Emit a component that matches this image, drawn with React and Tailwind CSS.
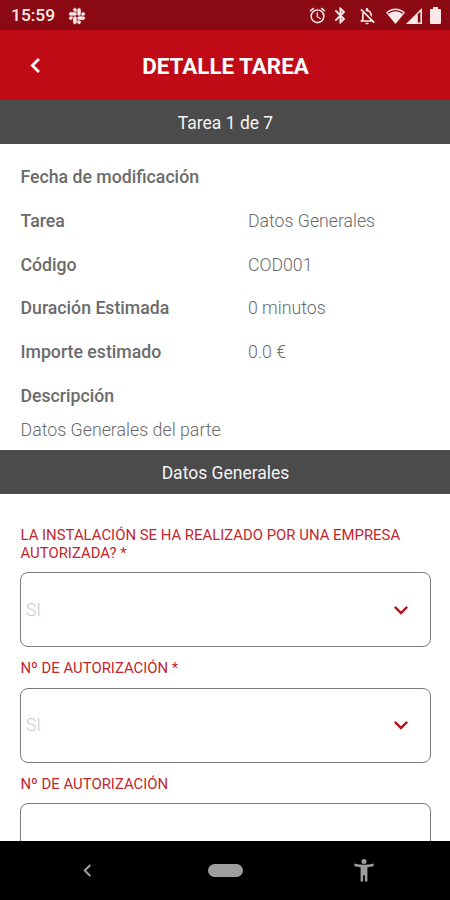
import React from "react";
import {
  MdBluetooth,
  MdChevronLeft,
  MdKeyboardArrowDown,
  MdOutlineAlarm,
  MdOutlineNotificationsOff,
} from "react-icons/md";
import { FaSlack } from "react-icons/fa";

const details = [
  { label: "Fecha de modificación", value: "" },
  { label: "Tarea", value: "Datos Generales" },
  { label: "Código", value: "COD001" },
  { label: "Duración Estimada", value: "0 minutos" },
  { label: "Importe estimado", value: "0.0 €" },
];

const StatusBar = () => {
  return (
    <div className="flex h-[30px] shrink-0 items-center bg-[#8b0912] pl-[11px] pr-[9px] pt-px text-[#fbe9e9]">
      <span className="w-[57px] pt-px text-[17.4px] font-medium leading-none">15:59</span>
      <FaSlack size={18} stroke="currentColor" strokeWidth={10} />
      <div className="ml-auto flex items-center">
        <MdOutlineAlarm size={19} />
        <MdBluetooth size={19} strokeWidth={0.6} className="ml-[4px] [&>path:first-child]:stroke-none" />
        <MdOutlineNotificationsOff size={20} className="ml-[7px]" />
        <svg width="19" height="16" viewBox="0 0 19 16" className="ml-[9px]">
          <path d="M0 4.4C5.5-.9 13.5-.9 19 4.4L9.5 16z" fill="currentColor" />
          <path d="M2 5.2C6.5 1.7 12.5 1.7 17 5.2" fill="none" stroke="#8b0912" strokeWidth="1.2" />
        </svg>
        <svg width="16" height="16" viewBox="0 0 16 16" className="ml-px">
          <path d="M16 0v16H0z" fill="currentColor" />
          <path d="M11.8 6.2l2.6-2.6v10.8h-2.6z" fill="#8b0912" />
        </svg>
        <svg width="11" height="17" viewBox="0 0 11 17" className="ml-[8px]">
          <path d="M3 0h5v2h2a1 1 0 0 1 1 1v13a1 1 0 0 1-1 1H1a1 1 0 0 1-1-1V3a1 1 0 0 1 1-1h2z" fill="currentColor" />
        </svg>
      </div>
    </div>
  );
};

const SectionBar = ({ children }) => {
  return (
    <div className="flex h-11 shrink-0 items-center justify-center bg-[#4b4b4b] pl-px pt-[3px] text-[17.5px] text-[#f4f4f4]">
      {children}
    </div>
  );
};

const Field = ({ label, children, select }) => {
  return (
    <div className="shrink-0">
      <label className="block pl-[0.5px] text-[14.9px] leading-[17.5px] text-[#c4262e]">{label}</label>
      <div className="mt-[10px] flex h-[75px] items-center justify-between rounded-[8px] border-[1.5px] border-[#7b7b7b] pl-[5px] pr-[15.5px]">
        <span className="pt-px text-[17.5px] font-light text-[#c8c8c8]">{children}</span>
        {select && <MdKeyboardArrowDown size={28} className="text-[#b8141c]" />}
      </div>
    </div>
  );
};

const App = () => {
  return (
    <div className="flex h-[900px] w-[450px] flex-col overflow-hidden bg-white font-['Roboto',sans-serif]">
      <StatusBar />

      <header className="grid h-[70px] shrink-0 grid-cols-[71px_1fr_71px] items-center bg-[#c00b17] text-white">
        <button type="button" className="flex justify-center">
          <MdChevronLeft size={29} strokeWidth={0.4} className="[&>path:first-child]:stroke-none" />
        </button>
        <h1 className="pl-px pt-[3px] text-center text-[22.4px] font-bold leading-none">DETALLE TAREA</h1>
      </header>

      <SectionBar>Tarea 1 de 7</SectionBar>

      <section className="h-[306px] shrink-0 pl-[20.5px] pt-[11.5px] text-[17.7px] text-[#6b6b6b]">
        {details.map((item) => (
          <div key={item.label} className="flex h-[43.75px] items-center">
            <span className="w-[227.5px] font-medium">{item.label}</span>
            <span className="font-light">{item.value}</span>
          </div>
        ))}
        <h2 className="flex h-[43.75px] items-center font-medium">Descripción</h2>
        <p className="text-[17.8px] leading-6 font-light">Datos Generales del parte</p>
      </section>

      <SectionBar>Datos Generales</SectionBar>

      <main className="flex min-h-0 flex-1 flex-col gap-[13px] overflow-hidden pl-[20px] pr-[19px] pt-[33px]">
        <Field label="LA INSTALACIÓN SE HA REALIZADO POR UNA EMPRESA AUTORIZADA? *" select>
          SI
        </Field>
        <Field label="Nº DE AUTORIZACIÓN *" select>
          SI
        </Field>
        <Field label="Nº DE AUTORIZACIÓN" />
      </main>

      <nav className="grid h-[59px] shrink-0 grid-cols-[174px_102px_174px] items-center justify-items-center bg-black text-[#9e9e9e]">
        <MdChevronLeft size={25} />
        <div className="h-[13px] w-[35px] rounded-full bg-[#9e9e9e]" />
        <svg width="20" height="23" viewBox="0 0 20 23" fill="currentColor" className="ml-px">
          <circle cx="10" cy="2.6" r="2.5" />
          <path d="M.4 4.6C6.5 6.2 13.5 6.2 19.6 4.6V7.2L13.4 8.2V22.6H10.9V16.2H9.1V22.6H6.6V8.2L.4 7.2z" />
        </svg>
      </nav>
    </div>
  );
};

export default App;
